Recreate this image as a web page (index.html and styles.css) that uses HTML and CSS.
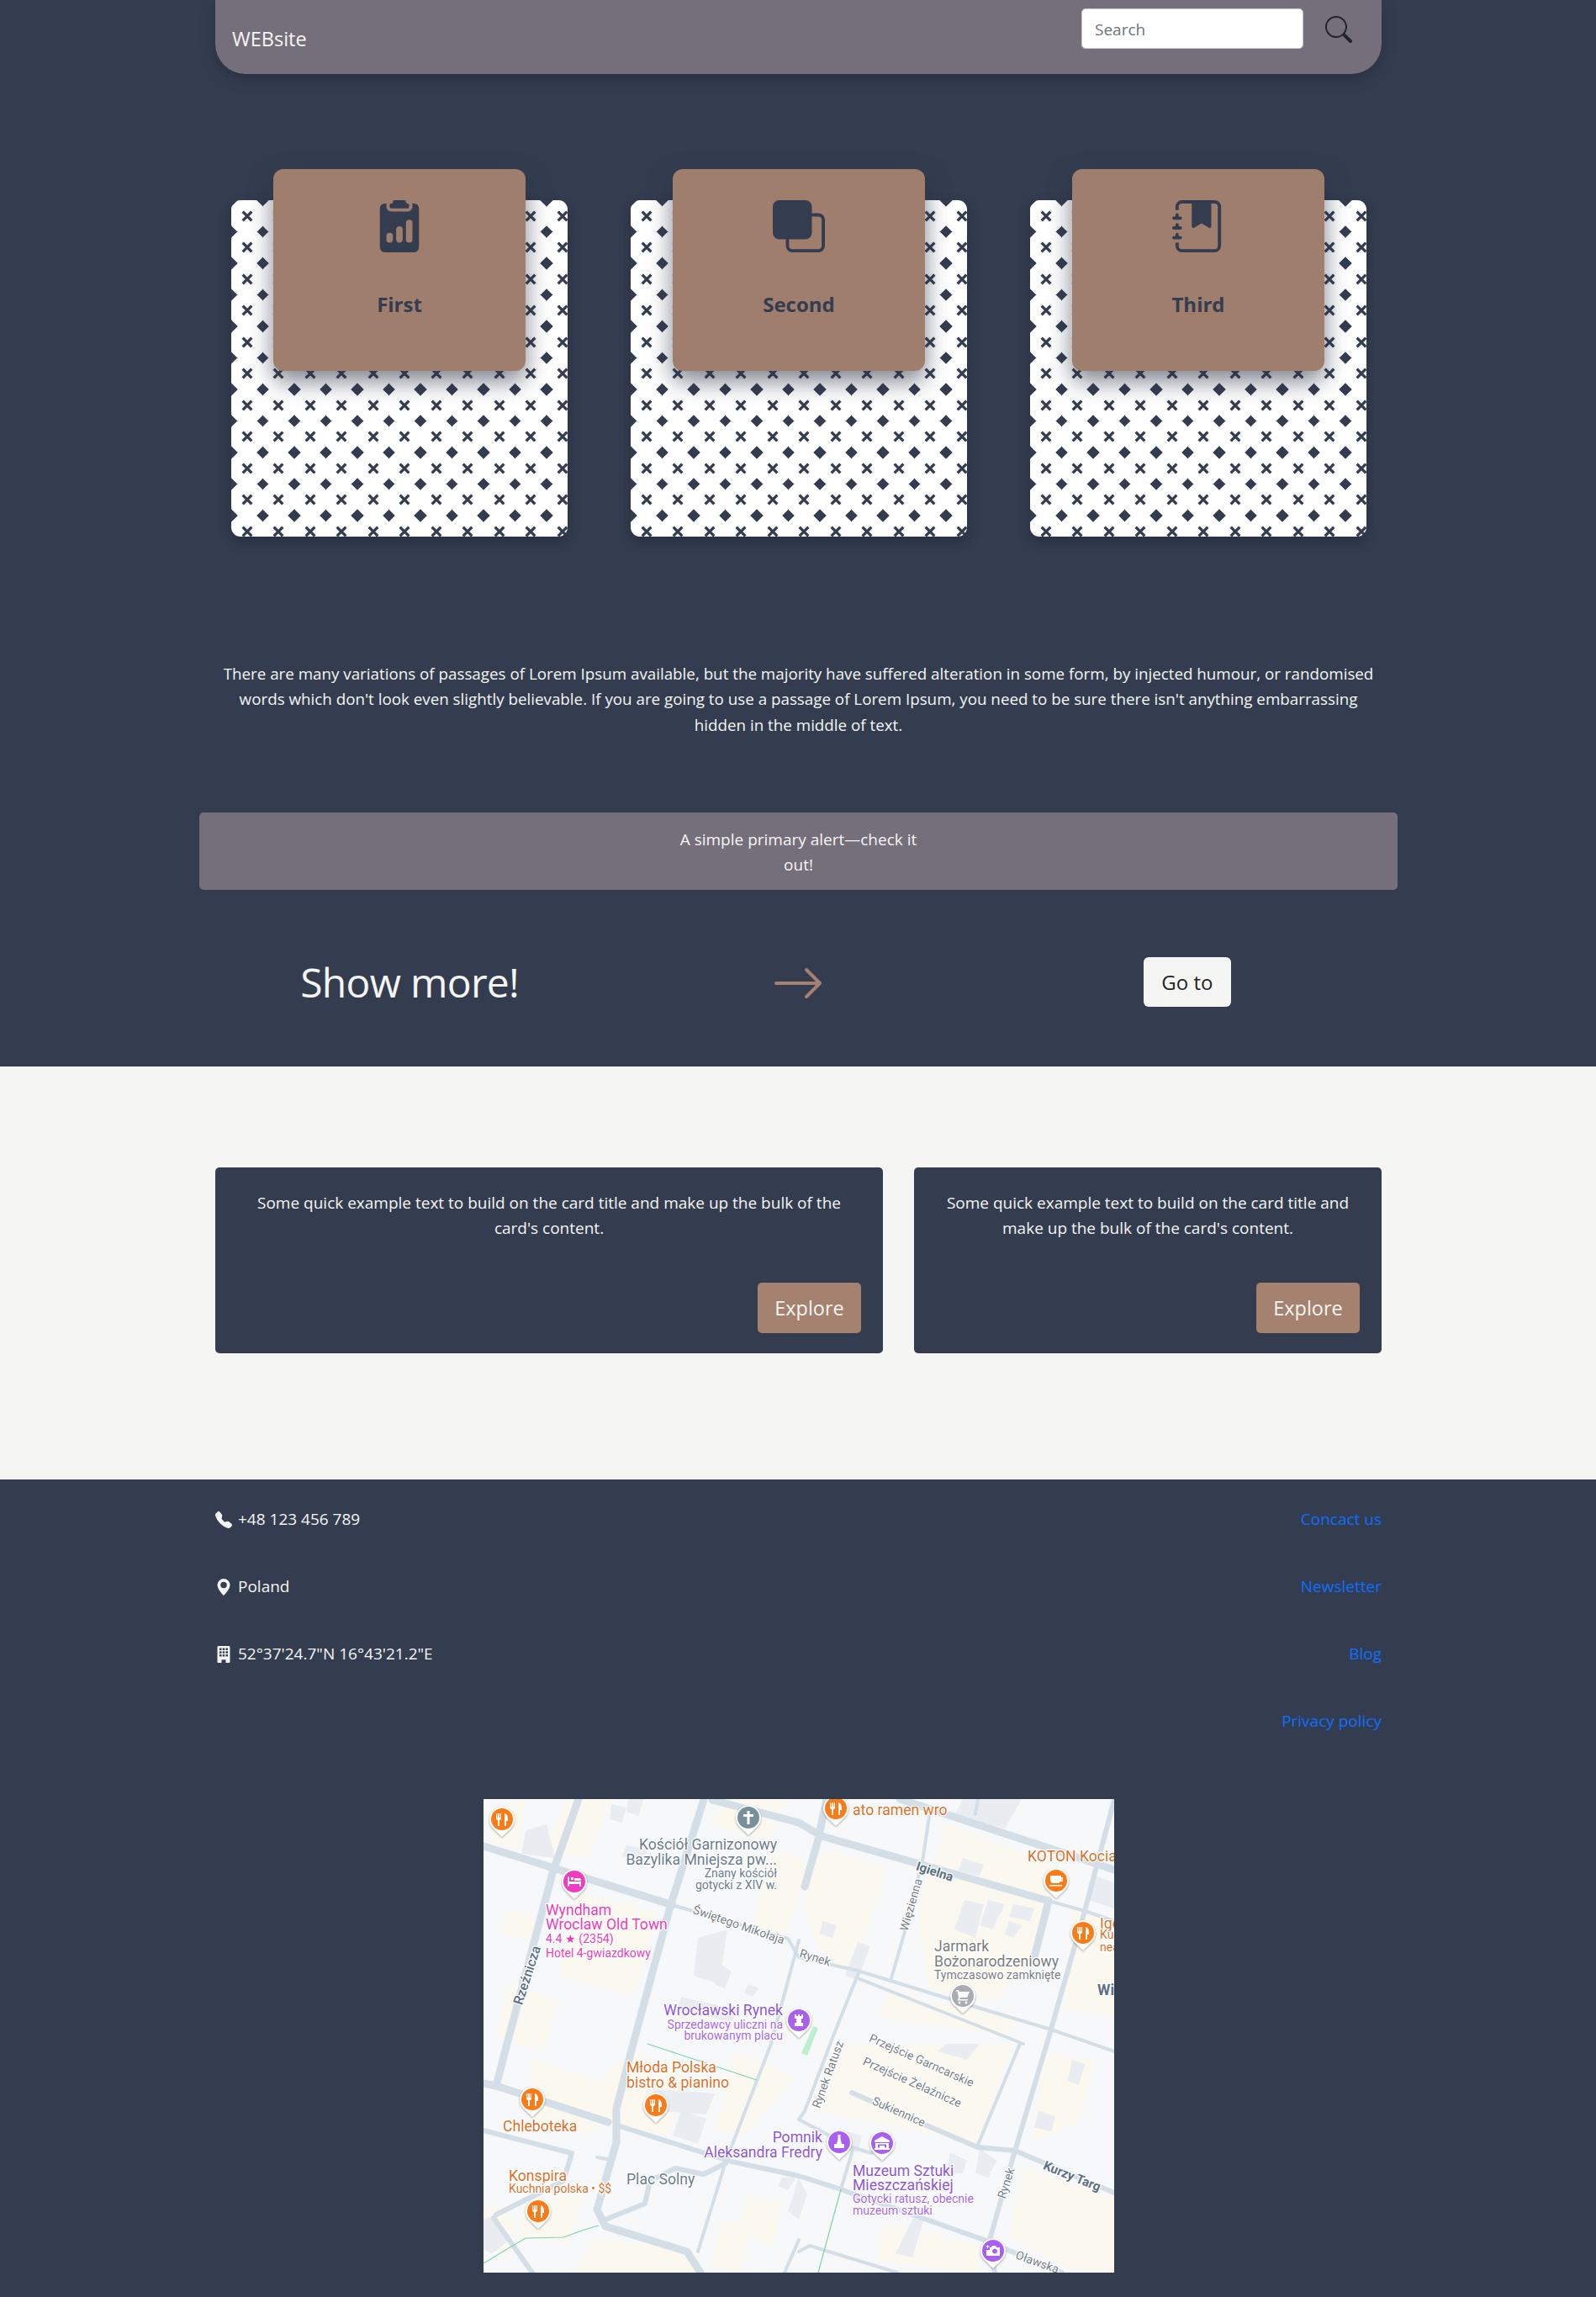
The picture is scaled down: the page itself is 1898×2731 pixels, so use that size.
FILE: index.html
```html
<!DOCTYPE html>
<html lang="en">
<head>
<meta charset="utf-8">
<title>WEBsite</title>
<link rel="stylesheet" href="styles.css">
</head>
<body>
<div class="dark-top">
  <nav class="navbar">
    <span class="brand">WEBsite</span>
    <form class="search">
      <input class="search-input" type="text" placeholder="Search">
      <svg class="search-icon" viewBox="0 0 16 16"><path d="M11.742 10.344a6.5 6.5 0 1 0-1.397 1.398h-.001c.03.04.062.078.098.115l3.85 3.85a1 1 0 0 0 1.415-1.414l-3.85-3.85a1.007 1.007 0 0 0-.115-.1zM12 6.5a5.5 5.5 0 1 1-11 0 5.5 5.5 0 0 1 11 0z"/></svg>
    </form>
  </nav>

  <section class="tiles">
    <article class="tile">
      <div class="tile-box">
        <svg class="tile-icon" viewBox="0 0 16 16"><path d="M10 .5a.5.5 0 0 0-.5-.5h-3a.5.5 0 0 0-.5.5.5.5 0 0 1-.5.5.5.5 0 0 0-.5.5V2a.5.5 0 0 0 .5.5h5A.5.5 0 0 0 11 2v-.5a.5.5 0 0 0-.5-.5.5.5 0 0 1-.5-.5Z"/><path d="M4.085 1H3.5A1.5 1.5 0 0 0 2 2.5v12A1.5 1.5 0 0 0 3.5 16h9a1.5 1.5 0 0 0 1.5-1.5v-12A1.5 1.5 0 0 0 12.5 1h-.585c.055.156.085.325.085.5V2a1.5 1.5 0 0 1-1.5 1.5h-5A1.5 1.5 0 0 1 4 2v-.5c0-.175.03-.344.085-.5ZM10 7a1 1 0 1 1 2 0v5a1 1 0 1 1-2 0V7Zm-6 4a1 1 0 1 1 2 0v1a1 1 0 1 1-2 0v-1Zm4-3a1 1 0 0 1 1 1v3a1 1 0 1 1-2 0V9a1 1 0 0 1 1-1Z"/></svg>
        <h3 class="tile-title">First</h3>
      </div>
    </article>
    <article class="tile">
      <div class="tile-box">
        <svg class="tile-icon" viewBox="0 0 16 16"><path d="M0 2a2 2 0 0 1 2-2h8a2 2 0 0 1 2 2v2h2a2 2 0 0 1 2 2v8a2 2 0 0 1-2 2H6a2 2 0 0 1-2-2v-2H2a2 2 0 0 1-2-2V2zm5 10v2a1 1 0 0 0 1 1h8a1 1 0 0 0 1-1V6a1 1 0 0 0-1-1h-2v5a2 2 0 0 1-2 2H5z"/></svg>
        <h3 class="tile-title">Second</h3>
      </div>
    </article>
    <article class="tile">
      <div class="tile-box">
        <svg class="tile-icon" viewBox="0 0 16 16"><path d="M6 1h6v7a.5.5 0 0 1-.757.429L9 7.083 6.757 8.43A.5.5 0 0 1 6 8V1z"/><path d="M3 0h10a2 2 0 0 1 2 2v12a2 2 0 0 1-2 2H3a2 2 0 0 1-2-2v-1h1v1a1 1 0 0 0 1 1h10a1 1 0 0 0 1-1V2a1 1 0 0 0-1-1H3a1 1 0 0 0-1 1v1H1V2a2 2 0 0 1 2-2z"/><path d="M1 5v-.5a.5.5 0 0 1 1 0V5h.5a.5.5 0 0 1 0 1h-2a.5.5 0 0 1 0-1H1zm0 3v-.5a.5.5 0 0 1 1 0V8h.5a.5.5 0 0 1 0 1h-2a.5.5 0 0 1 0-1H1zm0 3v-.5a.5.5 0 0 1 1 0v.5h.5a.5.5 0 0 1 0 1h-2a.5.5 0 0 1 0-1H1z"/></svg>
        <h3 class="tile-title">Third</h3>
      </div>
    </article>
  </section>

  <p class="intro">There are many variations of passages of Lorem Ipsum available, but the majority have suffered alteration in some form, by injected humour, or randomised words which don't look even slightly believable. If you are going to use a passage of Lorem Ipsum, you need to be sure there isn't anything embarrassing hidden in the middle of text.</p>

  <div class="alert"><span class="alert-text">A simple primary alert—check it out!</span></div>

  <div class="more">
    <h2 class="more-title">Show more!</h2>
    <svg class="more-arrow" viewBox="0 0 16 16"><path fill-rule="evenodd" d="M1 8a.5.5 0 0 1 .5-.5h11.793l-3.147-3.146a.5.5 0 0 1 .708-.708l4 4a.5.5 0 0 1 0 .708l-4 4a.5.5 0 0 1-.708-.708L13.293 8.5H1.5A.5.5 0 0 1 1 8z"/></svg>
    <a class="more-btn">Go to</a>
  </div>
</div>

<section class="light">
  <div class="info-card info-wide">
    <p class="info-text">Some quick example text to build on the card title and make up the bulk of the card's content.</p>
    <a class="explore">Explore</a>
  </div>
  <div class="info-card info-narrow">
    <p class="info-text">Some quick example text to build on the card title and make up the bulk of the card's content.</p>
    <a class="explore">Explore</a>
  </div>
</section>

<footer class="footer">
  <div class="contact">
    <ul class="contact-list">
      <li class="contact-item"><svg class="ci ci-phone" viewBox="0 0 16 16"><path fill-rule="evenodd" d="M1.885.511a1.745 1.745 0 0 1 2.61.163L6.29 2.98c.329.423.445.974.315 1.494l-.547 2.19a.678.678 0 0 0 .178.643l2.457 2.457a.678.678 0 0 0 .644.178l2.189-.547a1.745 1.745 0 0 1 1.494.315l2.306 1.794c.829.645.905 1.87.163 2.611l-1.034 1.034c-.74.74-1.846 1.065-2.877.702a18.634 18.634 0 0 1-7.01-4.42 18.634 18.634 0 0 1-4.42-7.009c-.362-1.03-.037-2.137.703-2.877L1.885.511z"/></svg>+48 123 456 789</li>
      <li class="contact-item"><svg class="ci" viewBox="0 0 16 16"><path d="M8 16s6-5.686 6-10A6 6 0 0 0 2 6c0 4.314 6 10 6 10zm0-7a3 3 0 1 1 0-6 3 3 0 0 1 0 6z"/></svg>Poland</li>
      <li class="contact-item"><svg class="ci" viewBox="0 0 16 16"><path fill-rule="evenodd" d="M3 0a1 1 0 0 0-1 1v14a1 1 0 0 0 1 1h3v-3h4v3h3a1 1 0 0 0 1-1V1a1 1 0 0 0-1-1H3zm1 2h2v2H4V2zm3 0h2v2H7V2zm3 0h2v2h-2V2zM4 5h2v2H4V5zm3 0h2v2H7V5zm3 0h2v2h-2V5zM4 8h2v2H4V8zm3 0h2v2H7V8zm3 0h2v2h-2V8z"/></svg>52°37'24.7"N 16°43'21.2"E</li>
    </ul>
    <ul class="link-list">
      <li class="link-item"><a class="link">Concact us</a></li>
      <li class="link-item"><a class="link">Newsletter</a></li>
      <li class="link-item"><a class="link">Blog</a></li>
      <li class="link-item"><a class="link">Privacy policy</a></li>
    </ul>
  </div>

  <svg class="map" viewBox="0 0 750 563" width="750" height="563">
    <defs>
      <symbol id="fork" overflow="visible"><path class="pin-ic" d="M-7-7v6q0 2 2 2v7h2V1q2 0 2-2v-6h-1.3v5h-.9v-5h-1.6v5h-.9v-5zM3-7q4 1 4 7v2H5v6H3z"/></symbol>
      <g id="pin-o"><path class="pin-base" d="M0 21-11 10.500A15 15 0 1 1 11 10.500Z"/><circle class="pc-orange" r="13"/><use href="#fork"/></g>
    </defs>
    <rect class="m-bg" width="750" height="563"/>
    <g class="m-soft">
      <g class="cream">
        <path d="M428 291 628 291 588 408 395 371Z"/>
        <path d="M668 301 728 311 708 384 652 408Z"/>
        <path d="M642 438 750 474 750 563 695 558 625 518Z"/>
        <path d="M475 504 595 531 588 563 468 548Z"/>
        <path d="M290 0 360 0 340 50 270 30Z"/>
        <path d="M395 60 480 80 465 130 440 210 400 180 380 130Z"/>
        <path d="M550 30 680 80 660 180 610 240 530 225 515 130Z"/>
        <path d="M100 0 150 0 125 70 70 60Z"/>
        <path d="M20 10 50 0 40 60 10 50Z"/>
        <path d="M110 110 205 135 180 235 90 210Z"/>
        <path d="M30 130 70 145 60 170 20 160Z"/>
        <path d="M30 220 90 240 70 300 15 285Z"/>
        <path d="M340 60 390 75 360 160 320 150Z"/>
        <path d="M180 300 240 330 220 400 120 380 150 320Z"/>
        <path d="M60 310 150 340 130 400 50 380Z"/>
        <path d="M300 300 370 330 310 400 275 395Z"/>
        <path d="M50 480 120 470 100 530 40 520Z"/>
        <path d="M130 520 260 540 255 563 110 563Z"/>
        <path d="M315 470 355 480 345 530 300 515Z"/>
        <path d="M285 500 320 510 305 563 270 555Z"/>
        <path d="M700 130 750 150 750 260 690 250Z"/>
        <path d="M480 230 640 260 620 280 470 260Z"/>
        <path d="M0 480 40 500 30 545 0 530Z"/>
      </g>
      <g class="bldg">
        <path d="M50 38 75 30 85 70 45 65Z"/>
        <path d="M152 6 170 10 165 28 150 24Z"/>
        <path d="M172 0 190 0 185 20 170 15Z"/>
        <path d="M170 55 195 60 190 75 165 68Z"/>
        <path d="M255 165 290 155 280 220 250 210Z"/>
        <path d="M280 195 295 205 287 225 275 220Z"/>
        <path d="M315 220 328 225 320 235 310 230Z"/>
        <path d="M235 235 300 250 295 265 230 250Z"/>
        <path d="M570 0 640 0 620 35 560 20Z"/>
        <path d="M570 70 595 78 590 92 565 85Z"/>
        <path d="M572 120 595 125 585 165 560 155Z"/>
        <path d="M600 120 620 125 605 155 590 150Z"/>
        <path d="M630 125 655 130 650 145 625 140Z"/>
        <path d="M625 145 640 150 630 165 620 160Z"/>
        <path d="M445 170 460 175 445 215 430 210Z"/>
        <path d="M403 145 420 150 415 165 400 160Z"/>
        <path d="M725 90 750 100 750 130 720 120Z"/>
        <path d="M235 370 265 380 255 410 225 400Z"/>
        <path d="M202 345 275 350 265 375 195 370Z"/>
        <path d="M375 450 385 470 375 500 362 490Z"/>
        <path d="M355 450 372 450 362 465 350 460Z"/>
        <path d="M430 395 450 400 445 420 425 415Z"/>
        <path d="M555 420 575 430 570 445 550 445Z"/>
        <path d="M590 415 610 430 600 450 585 445Z"/>
        <path d="M660 370 680 378 675 395 655 390Z"/>
        <path d="M515 490 525 495 510 545 490 540Z"/>
        <path d="M700 310 715 315 708 340 695 335Z"/>
        <path d="M0 500 15 495 30 525 10 540 0 535Z"/>
        <path d="M550 291 590 291 575 310 540 300Z"/>
      </g>
      <g class="road">
        <path class="rw" d="M0 56 225 126"/>
        <path class="rw" d="M113 0 82 88 28 291 15 341"/>
        <path class="rw" d="M262 0 222 128 178 291 158 368 158 408 135 488 145 508 242 538 258 563"/>
        <path class="rw" d="M272 1 375 28 402 44 672 121"/>
        <path class="rw" d="M495 0 702 68 750 84"/>
        <path class="rw" d="M0 338 15 341 148 384"/>
        <path class="rw" d="M672 121 655 188"/>
        <path class="rw" d="M408 0 398 48 382 104"/>
        <path class="rm" d="M0 394 105 421 95 454 15 494"/>
        <path class="rm" d="M12 498 58 563"/>
        <path class="rm" d="M162 389 295 431 375 448 425 464 595 524 628 538 688 563"/>
        <path class="rm" d="M142 501 192 481 198 454 228 439 262 446 288 433"/>
        <path class="rm" d="M438 349 522 386 588 414 632 418 750 468"/>
        <path class="rm" d="M750 1 715 133 672 284 632 418 602 524 608 563"/>
        <path class="rt" d="M225 126 362 166 375 188 445 204 588 248 675 274 750 300"/>
        <path class="rt" d="M445 213 642 291"/>
        <path class="rt" d="M530 21 522 74 500 161 485 213"/>
        <path class="rt" d="M588 0 585 18"/>
        <path class="rt" d="M672 121 715 133 750 145"/>
        <path class="rt" d="M447 204 415 284 382 371 375 381"/>
        <path class="rt" d="M375 168 342 291 288 431 255 538"/>
        <path class="rt" d="M638 291 588 411"/>
        <path class="rt" d="M375 381 438 414 462 421"/>
        <path class="rt" d="M440 414 425 464"/>
        <path class="rt" d="M375 538 388 531 492 563"/>
        <path class="rt" d="M375 524 358 563"/>
        <path class="rt" d="M135 426 148 428"/>
      </g>
      <g class="green">
        <path d="M425 464 398 563"/>
        <path d="M195 291 325 334"/>
        <path d="M0 552 28 535 50 522 95 521 120 512 137 507"/>
        <path class="gfill" d="M392 270 398 272 385 305 378 302Z"/>
      </g>
    </g>

    <g class="lb lb-slate">
      <text class="t17" x="349" y="60" text-anchor="end">Kościół Garnizonowy</text>
      <text class="t17" x="349" y="78" text-anchor="end">Bazylika Mniejsza pw...</text>
      <text class="t14" x="349" y="93" text-anchor="end">Znany kościół</text>
      <text class="t14" x="349" y="107" text-anchor="end">gotycki z XIV w.</text>
      <text class="t17" x="170" y="458">Plac Solny</text>
    </g>
    <g class="lb lb-pink">
      <text class="t17" x="74" y="138">Wyndham</text>
      <text class="t17" x="74" y="155">Wroclaw Old Town</text>
      <text class="t14" x="74" y="171">4.4 ★ (2354)</text>
      <text class="t14" x="74" y="188">Hotel 4-gwiazdkowy</text>
    </g>
    <g class="lb lb-orange">
      <text class="t17" x="439" y="19">ato ramen wro</text>
      <text class="t17" x="647" y="74">KOTON Kocia</text>
      <text class="t17" x="733" y="154">Igo</text>
      <text class="t14" x="733" y="166">Kuc</text>
      <text class="t14" x="733" y="181">nea</text>
      <text class="t17" x="170" y="325">Młoda Polska</text>
      <text class="t17" x="170" y="343">bistro &amp; pianino</text>
      <text class="t17" x="23" y="395">Chleboteka</text>
      <text class="t17" x="30" y="454">Konspira</text>
      <text class="t14" x="30" y="468">Kuchnia polska • $$</text>
    </g>
    <g class="lb lb-purple">
      <text class="t17" x="356" y="257" text-anchor="end">Wrocławski Rynek</text>
      <text class="t14 lb-lilac" x="356" y="273" text-anchor="end">Sprzedawcy uliczni na</text>
      <text class="t14 lb-lilac" x="356" y="286" text-anchor="end">brukowanym placu</text>
      <text class="t17" x="403" y="408" text-anchor="end">Pomnik</text>
      <text class="t17" x="403" y="426" text-anchor="end">Aleksandra Fredry</text>
      <text class="t17" x="439" y="448">Muzeum Sztuki</text>
      <text class="t17" x="439" y="465">Mieszczańskiej</text>
      <text class="t14 lb-lilac" x="439" y="480">Gotycki ratusz, obecnie</text>
      <text class="t14 lb-lilac" x="439" y="494">muzeum sztuki</text>
    </g>
    <g class="lb lb-grey">
      <text class="t17" x="536" y="181">Jarmark</text>
      <text class="t17" x="536" y="199">Bożonarodzeniowy</text>
      <text class="t14" x="536" y="214">Tymczasowo zamknięte</text>
    </g>
    <g class="lb lb-street">
      <text class="t14" text-anchor="middle" transform="translate(302 154) rotate(19)">Świętego Mikołaja</text>
      <text class="t14" text-anchor="middle" transform="translate(393 193) rotate(17)">Rynek</text>
      <text class="t14" text-anchor="middle" transform="translate(513 127) rotate(-74)">Więzienna</text>
      <text class="t14" text-anchor="middle" transform="translate(519 315) rotate(24)">Przejście Garncarskie</text>
      <text class="t14" text-anchor="middle" transform="translate(508 341) rotate(24)">Przejście Żelaźnicze</text>
      <text class="t14" text-anchor="middle" transform="translate(492 376) rotate(24)">Sukiennice</text>
      <text class="t14" text-anchor="middle" transform="translate(414 329) rotate(-70)">Rynek Ratusz</text>
      <text class="t14" text-anchor="middle" transform="translate(626 458) rotate(-72)">Rynek</text>
      <text class="t14" text-anchor="middle" transform="translate(657 555) rotate(20)">Oławska</text>
    </g>
    <g class="lb lb-main">
      <text class="t16" text-anchor="middle" transform="translate(57 211) rotate(-72)">Rzeźnicza</text>
      <text class="t15" text-anchor="middle" transform="translate(535 91) rotate(18)">Igielna</text>
      <text class="t15" text-anchor="middle" transform="translate(698 453) rotate(22)">Kurzy Targ</text>
      <text class="t17" x="730" y="233">Wie</text>
    </g>

    <use href="#pin-o" x="22" y="24"/>
    <use href="#pin-o" x="419" y="11"/>
    <use href="#pin-o" x="713" y="159"/>
    <use href="#pin-o" x="58" y="357"/>
    <use href="#pin-o" x="205" y="364"/>
    <use href="#pin-o" x="65" y="490"/>
    <g transform="translate(681 97)"><path class="pin-base" d="M0 21-11 10.500A15 15 0 1 1 11 10.500Z"/><circle class="pc-orange" r="13"/><path class="pin-ic" d="M-7-6H6v2h2v5H5Q4 3 2 3h-5q-4 0-4-4zM6-2V-0h.5v-2zM-8 5H7v1.500H-8z"/></g>
    <g transform="translate(108 98)"><path class="pin-base" d="M0 21-11 10.500A15 15 0 1 1 11 10.500Z"/><circle class="pc-pink" r="13"/><path class="pin-ic" d="M-8-6h2v6h14v6H6V3H-6v3h-2zM-4-5h3v3h-3zM0-4h6q2 0 2 2v1H0z"/></g>
    <g transform="translate(315 22)"><path class="pin-base" d="M0 21-11 10.500A15 15 0 1 1 11 10.500Z"/><circle class="pc-slate" r="13"/><path class="pin-ic" d="M-1.500-8h3v4H6v3H1.500V8h-3V-1H-6v-3h4.500z"/></g>
    <g transform="translate(570 234)"><path class="pin-base" d="M0 21-11 10.500A15 15 0 1 1 11 10.500Z"/><circle class="pc-grey" r="13"/><path class="pin-ic" d="M-8-7h3l1 2H8L5 2H-3l-1 2H6v1.500H-6.500L-5 2-6.500-5.500H-8zM-4 6.500a1.500 1.500 0 1 0 .01 0zM4 6.500a1.500 1.500 0 1 0 .01 0z"/></g>
    <g transform="translate(375 263)"><path class="pin-base" d="M0 21-11 10.500A15 15 0 1 1 11 10.500Z"/><circle class="pc-purple" r="13"/><path class="pin-ic" d="M-5-7h2v2h2v-2h2v2h2v-2h2v5H3V3h2v4h-10V3h2V-2h-2z"/></g>
    <g transform="translate(423 408)"><path class="pin-base" d="M0 21-11 10.500A15 15 0 1 1 11 10.500Z"/><circle class="pc-purple" r="13"/><path class="pin-ic" d="M-1.500-9h3V-4L3 2H6V7H-6V2H-3L-1.500-4z"/></g>
    <g transform="translate(474 409)"><path class="pin-base" d="M0 21-11 10.500A15 15 0 1 1 11 10.500Z"/><circle class="pc-purple" r="13"/><path class="pin-ic" fill-rule="evenodd" d="M0-8 9-3V-1H-9V-3zM-8 0H8V6H9V8H-9V6H-8zM-5 1.500V5.500H-3V3H3V5.500H5V1.500z"/></g>
    <g transform="translate(606 537)"><path class="pin-base" d="M0 21-11 10.500A15 15 0 1 1 11 10.500Z"/><circle class="pc-purple" r="13"/><path class="pin-ic" fill-rule="evenodd" d="M-4-4h2l1-2H3l1 2H8V6H-8V-1H-4zM2-2.500a3 3 0 1 0 .01 0zM-7-7h1v1.500H-4.500v1H-6V-3H-7v-1.500H-8.500v-1H-7z"/></g>
  </svg>
</footer>
</body>
</html>
```

FILE: styles.css
```css
* { box-sizing: border-box; }
html, body { margin: 0; padding: 0; }
body {
  background: #343d50;
  color: #f5f5f3;
  font-family: "Open Sans", "Noto Sans", sans-serif;
  font-size: 19px;
  line-height: 30px;
}

.dark-top { height: 1268px; }

.navbar {
  width: 1387px;
  height: 88px;
  margin: 0 0 0 256px;
  padding: 0 35px 0 20px;
  background: #756f7b;
  border-radius: 0 0 36px 36px;
  box-shadow: 0 6px 16px rgba(30, 35, 48, .45);
  display: flex;
  justify-content: space-between;
}
.brand { margin-top: 27px; font-size: 23.5px; line-height: 38px; color: #f5f5f3; }
.search { display: flex; align-items: flex-start; gap: 26px; padding-top: 10px; }
.search-input {
  width: 264px;
  height: 48px;
  padding: 2px 15px 0;
  border: 1px solid #c9c6cc;
  border-radius: 5px;
  background: #fff;
  font: 19px "Open Sans", sans-serif;
  color: #6c757d;
}
.search-input::placeholder { color: #6c757d; opacity: 1; }
.search-icon { width: 32px; height: 32px; margin-top: 9px; fill: #212529; }

.tiles {
  display: flex;
  gap: 75px;
  margin: 150px 0 0 275px;
}
.tile {
  width: 400px;
  height: 400px;
  flex: none;
  border-radius: 11px;
  background-color: #fff;
  background-image: url("data:image/svg+xml,%3Csvg xmlns='http://www.w3.org/2000/svg' width='75' height='75' viewBox='0 0 37.5 37.5'%3E%3Crect x='12' y='12' width='13.500' height='13.500' fill='%23f8f8f7'/%3E%3Cpath fill='%23343d50' d='M0-7.700 7.700 0 0 7.700-7.700 0ZM37.500-7.700 45.200 0 37.500 7.700 29.800 0ZM0 29.800 7.700 37.500 0 45.200-7.700 37.500ZM37.500 29.800 45.200 37.500 37.500 45.200 29.800 37.500Z'/%3E%3Cpath stroke='%23343d50' stroke-width='3.300' d='M13.500 13.500 24 24M24 13.500 13.500 24'/%3E%3C/svg%3E");
  background-size: 37.5px 37.5px;
  box-shadow: 0 6px 14px rgba(25, 30, 42, .45);
}
.tile-box {
  width: 300px;
  height: 240px;
  margin: -37px 0 0 50px;
  padding-top: 37px;
  border-radius: 12px;
  background: #9f7e6d;
  box-shadow: 0 12px 28px rgba(40, 47, 66, .6);
  display: flex;
  flex-direction: column;
  align-items: center;
  position: relative;
}
.tile-icon { width: 62px; height: 62px; fill: #343d50; flex: none; }
.tile-title {
  margin: 46px 0 0;
  font-size: 24px;
  line-height: 32px;
  font-weight: 700;
  color: #343d50;
}

.intro {
  width: 1387px;
  margin: 148px 0 0 256px;
  text-align: center;
  font-size: 18.8px;
  line-height: 30.4px;
}

.alert {
  width: 1425px;
  height: 92px;
  margin: 89px 0 0 237px;
  padding-top: 17px;
  background: #756f7b;
  border-radius: 5px;
  text-align: center;
  display: flex;
  justify-content: center;
}
.alert-text { display: block; width: 300px; }

.more {
  width: 1387px;
  margin: 75px 0 0 256px;
  display: grid;
  grid-template-columns: repeat(3, 1fr);
  justify-items: center;
  align-items: center;
  height: 59px;
}
.more-title { margin: 2px 0 0; font-size: 48px; line-height: 60px; font-weight: 400; letter-spacing: -.7px; color: #f5f5f3; }
.more-arrow { width: 64px; height: 64px; fill: #a5826f; margin-top: 4px; }
.more-btn {
  display: block;
  width: 104px;
  height: 59px;
  background: #f5f5f3;
  border-radius: 6px;
  color: #212529;
  font-size: 24px;
  line-height: 59px;
  text-align: center;
}

.light {
  height: 491px;
  padding: 120px 0 0 256px;
  background: #f5f5f3;
  display: flex;
  gap: 37px;
}
.info-card {
  height: 221px;
  padding: 27px 26px 24px;
  background: #343d50;
  border-radius: 5px;
  display: flex;
  flex-direction: column;
  justify-content: space-between;
  text-align: center;
}
.info-wide { width: 794px; }
.info-narrow { width: 556px; }
.info-text { margin: 0; }
.explore {
  align-self: flex-end;
  width: 123px;
  height: 60px;
  background: #a5826f;
  border-radius: 5px;
  color: #f5f5f3;
  font-size: 23.5px;
  line-height: 60px;
  text-align: center;
}

.footer { padding: 7px 0 29px; }
.contact {
  width: 1387px;
  margin: 0 0 53px 256px;
  display: flex;
  justify-content: space-between;
}
.contact-list, .link-list { list-style: none; margin: 0; padding: 0; }
.contact-item, .link-item { height: 80px; line-height: 80px; }
.contact-item { display: flex; align-items: center; gap: 7px; }
.link-item { text-align: right; }
.link { color: #0d6efd; }
.ci { width: 20px; height: 20px; fill: #f5f5f3; flex: none; margin-top: 2px; }

.map { display: block; margin: 0 0 0 575px; font-family: Roboto, sans-serif; }
.m-bg { fill: #f7f8f9; }
.m-soft { filter: blur(.5px); }
.cream path { fill: #fbf8f0; }
.bldg path { fill: #e9ecf1; }
.road path { fill: none; stroke: #d3dee7; stroke-linejoin: round; stroke-linecap: round; }
.rw { stroke-width: 9px; }
.rm { stroke-width: 6px; }
.rt { stroke-width: 4px; }
.green path { fill: none; stroke: #7fd3a8; stroke-width: 1.2px; }
.green .gfill { fill: #bdeed0; stroke: none; }

.lb text { paint-order: stroke; stroke: #fff; stroke-width: 2.5px; stroke-linejoin: round; }
.t17 { font-size: 17.6px; }
.t16 { font-size: 16px; font-weight: 500; }
.t15 { font-size: 15px; font-weight: 700; }
.t14 { font-size: 14px; }
.lb-slate { fill: #6b7e8c; }
.lb-pink { fill: #e83fb8; }
.lb-orange { fill: #d9722c; }
.lb-purple { fill: #8c57d8; }
.lb .lb-lilac { fill: #a768ec; }
.lb-grey { fill: #787e82; }
.lb-street { fill: #767f88; }
.lb-main { fill: #5b6f82; }
.lb-main .t17 { font-weight: 700; }

.pin-base { fill: #fff; filter: drop-shadow(0 1px 1px rgba(0, 0, 0, .35)); }
.pin-ic { fill: #fff; }
.pc-orange { fill: #fa7b17; }
.pc-pink { fill: #f03cc0; }
.pc-slate { fill: #78909c; }
.pc-grey { fill: #a9adb1; }
.pc-purple { fill: #a960f2; }
```
